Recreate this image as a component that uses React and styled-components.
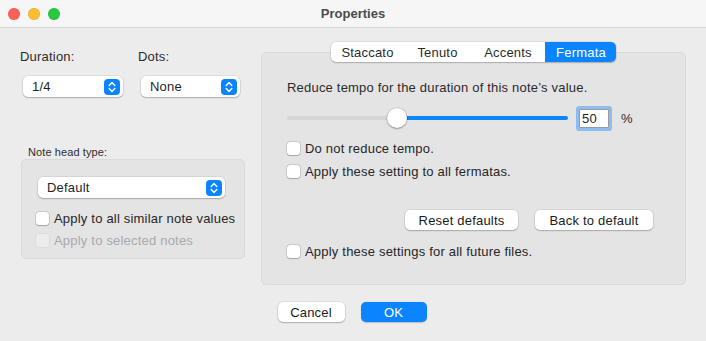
import React from 'react';
import styled, { createGlobalStyle } from 'styled-components';

const GlobalStyle = createGlobalStyle`
  html, body {
    margin: 0;
    padding: 0;
    background: #ececec;
  }
  body {
    font-family: "Liberation Sans", Arial, sans-serif;
    font-size: 13px;
    letter-spacing: 0.2px;
    color: #262626;
  }
`;

const Window = styled.div`
  width: 706px;
  height: 341px;
  background: #ececec;
  display: flex;
  flex-direction: column;
  overflow: hidden;
`;

const TitleBar = styled.div`
  height: 28px;
  flex: none;
  background: #f6f6f6;
  border-bottom: 1px solid #d8d8d8;
  box-sizing: border-box;
  display: flex;
  align-items: center;
  padding-left: 8px;
`;

const Lights = styled.div`
  display: flex;
  gap: 8px;
`;

const Light = styled.span`
  width: 12px;
  height: 12px;
  border-radius: 50%;
  background: ${p => p.color};
  box-shadow: inset 0 0 0 0.5px rgba(0, 0, 0, 0.12);
`;

const Title = styled.div`
  flex: 1;
  text-align: center;
  font-weight: 700;
  font-size: 13px;
  letter-spacing: 0;
  color: #4b4b4b;
  margin-right: 60px;
`;

const Body = styled.div`
  flex: 1;
  display: flex;
  flex-direction: column;
  padding: 14px 20px 0;
`;

const Columns = styled.div`
  display: flex;
  gap: 16px;
`;

const LeftColumn = styled.div`
  width: 225px;
  flex: none;
  padding-top: 7px;
`;

const FieldGrid = styled.div`
  display: grid;
  grid-template-columns: 118px 107px;
`;

const FieldLabel = styled.div`
  line-height: 16px;
  color: #2b2b2b;
  margin-bottom: 11px;
`;

const Popup = styled.div`
  width: ${p => p.width}px;
  height: 21px;
  margin-left: ${p => p.inset || 0}px;
  box-sizing: border-box;
  background: #fff;
  border-radius: 5px;
  box-shadow: 0 0 0 0.5px rgba(0, 0, 0, 0.12), 0 1px 1.5px rgba(0, 0, 0, 0.22);
  display: flex;
  align-items: center;
  justify-content: space-between;
  padding: 0 3px 0 9px;
  color: #1f1f1f;
`;

const PopupArrow = styled.span`
  width: 16px;
  height: 16px;
  border-radius: 4px;
  background: #0b84ff;
  display: flex;
  align-items: center;
  justify-content: center;
`;

const SmallLabel = styled.div`
  font-size: 11px;
  line-height: 13px;
  letter-spacing: 0.1px;
  color: #2e2e2e;
  margin: 49px 0 0 8px;
`;

const GroupBox = styled.div`
  margin-left: 1px;
  height: 100px;
  box-sizing: border-box;
  background: #e4e4e4;
  border: 1px solid #dadada;
  border-radius: 5px;
  padding: 17px 19px 0 14px;
`;

const CheckRow = styled.label`
  display: flex;
  align-items: center;
  gap: 5px;
  height: 16px;
  white-space: nowrap;
  margin-top: ${p => p.top || 0}px;
  color: ${p => (p.disabled ? '#a9a9a9' : '#262626')};
`;

const Box = styled.span`
  width: 13px;
  height: 13px;
  flex: none;
  box-sizing: border-box;
  border-radius: 3px;
  background: ${p => (p.disabled ? '#ececec' : '#fff')};
  box-shadow: ${p =>
    p.disabled
      ? '0 0 0 0.5px rgba(0,0,0,0.08)'
      : '0 0 0 0.5px rgba(0,0,0,0.2), 0 0.5px 1px rgba(0,0,0,0.2)'};
`;

const RightColumn = styled.div`
  flex: 1;
  display: flex;
  flex-direction: column;
  align-items: center;
`;

const Segmented = styled.div`
  display: flex;
  height: 20px;
  background: #fff;
  border-radius: 5px;
  box-shadow: 0 0 0 0.5px rgba(0, 0, 0, 0.12), 0 1px 1.5px rgba(0, 0, 0, 0.2);
  margin-bottom: -10px;
  position: relative;
  z-index: 1;
`;

const Segment = styled.div`
  width: ${p => p.width}px;
  display: flex;
  align-items: center;
  justify-content: center;
  color: ${p => (p.active ? '#fff' : '#2b2b2b')};
  background: ${p => (p.active ? '#0a84ff' : 'transparent')};
  border-radius: ${p => (p.active ? '0 5px 5px 0' : '0')};
  & + & {
    border-left: 1px solid ${p => (p.active ? 'transparent' : '#d6d6d6')};
  }
`;

const Panel = styled.div`
  align-self: stretch;
  height: 233px;
  box-sizing: border-box;
  background: #e4e4e4;
  border: 1px solid #dadada;
  border-radius: 5px;
  padding: 27px 32px 0 25px;
  display: flex;
  flex-direction: column;
`;

const Text = styled.div`
  line-height: 16px;
  color: #2b2b2b;
`;

const SliderRow = styled.div`
  display: flex;
  align-items: center;
  height: 24px;
  margin-top: 10px;
`;

const Slider = styled.div`
  width: 281px;
  height: 20px;
  position: relative;
  display: flex;
  align-items: center;
`;

const Track = styled.div`
  width: 100%;
  height: 4px;
  border-radius: 2px;
  background: linear-gradient(
    to right,
    #d5d5d5 0,
    #d5d5d5 ${p => p.value}%,
    #0a84ff ${p => p.value}%,
    #0a84ff 100%
  );
`;

const Knob = styled.div`
  position: absolute;
  top: 0;
  width: 20px;
  height: 20px;
  margin-left: -10px;
  border-radius: 50%;
  background: #fff;
  box-shadow: 0 0 0 0.5px rgba(0, 0, 0, 0.15), 0 1px 2px rgba(0, 0, 0, 0.3);
`;

const NumberField = styled.div`
  width: 30px;
  height: 19px;
  margin-left: 11px;
  box-sizing: border-box;
  background: #fff;
  border: 1px solid #9a9a9a;
  box-shadow: 0 0 0 3px #8fbcf0;
  border-radius: 1px;
  padding-left: 2px;
  line-height: 17px;
  color: #1f1f1f;
`;

const Unit = styled.span`
  margin-left: 12px;
  color: #2b2b2b;
`;

const ButtonRow = styled.div`
  display: flex;
  justify-content: flex-end;
  gap: 17px;
  margin-top: 31px;
`;

const Button = styled.button`
  width: ${p => p.width}px;
  height: 20px;
  padding: 0;
  border: none;
  border-radius: 5px;
  font-family: inherit;
  font-size: 13px;
  letter-spacing: 0.2px;
  color: ${p => (p.primary ? '#fff' : '#1a1a1a')};
  background: ${p => (p.primary ? '#0a84ff' : '#fff')};
  box-shadow: ${p =>
    p.primary
      ? '0 0.5px 1px rgba(0,0,0,0.2)'
      : '0 0 0 0.5px rgba(0,0,0,0.12), 0 1px 1.5px rgba(0,0,0,0.22)'};
`;

const Footer = styled.div`
  display: flex;
  justify-content: center;
  gap: 16px;
  margin: 17px 2px 0 0;
`;

const Chevrons = () => (
  <svg width="8" height="12" viewBox="0 0 8 12" fill="none">
    <path d="M1.2 4.4 4 1.6l2.8 2.8M1.2 7.6 4 10.4l2.8-2.8" stroke="#fff" strokeWidth="1.4" strokeLinecap="round" strokeLinejoin="round" />
  </svg>
);

const Check = ({ children, disabled, top }) => (
  <CheckRow disabled={disabled} top={top}>
    <Box disabled={disabled} />
    {children}
  </CheckRow>
);

const PopupButton = ({ value, width, inset }) => (
  <Popup width={width} inset={inset}>
    {value}
    <PopupArrow>
      <Chevrons />
    </PopupArrow>
  </Popup>
);

const tabs = [
  { name: 'Staccato', width: 73 },
  { name: 'Tenuto', width: 65 },
  { name: 'Accents', width: 74 },
  { name: 'Fermata', width: 70, active: true },
];

const tempo = 39;

export default function App() {
  return (
    <>
      <GlobalStyle />
      <Window>
        <TitleBar>
          <Lights>
            <Light color="#ff5f57" />
            <Light color="#febc2e" />
            <Light color="#28c840" />
          </Lights>
          <Title>Properties</Title>
        </TitleBar>
        <Body>
          <Columns>
            <LeftColumn>
              <FieldGrid>
                <div>
                  <FieldLabel>Duration:</FieldLabel>
                  <PopupButton value="1/4" width={100} inset={3} />
                </div>
                <div>
                  <FieldLabel>Dots:</FieldLabel>
                  <PopupButton value="None" width={99} inset={3} />
                </div>
              </FieldGrid>
              <SmallLabel>Note head type:</SmallLabel>
              <GroupBox>
                <PopupButton value="Default" width={187} inset={2} />
                <Check top={12}>Apply to all similar note values</Check>
                <Check top={6} disabled>Apply to selected notes</Check>
              </GroupBox>
            </LeftColumn>
            <RightColumn>
              <Segmented>
                {tabs.map(t => (
                  <Segment key={t.name} width={t.width} active={t.active}>
                    {t.name}
                  </Segment>
                ))}
              </Segmented>
              <Panel>
                <Text>Reduce tempo for the duration of this note’s value.</Text>
                <SliderRow>
                  <Slider>
                    <Track value={tempo} />
                    <Knob style={{ left: `${tempo}%` }} />
                  </Slider>
                  <NumberField>50</NumberField>
                  <Unit>%</Unit>
                </SliderRow>
                <Check top={10}>Do not reduce tempo.</Check>
                <Check top={7}>Apply these setting to all fermatas.</Check>
                <ButtonRow>
                  <Button width={113}>Reset defaults</Button>
                  <Button width={118}>Back to default</Button>
                </ButtonRow>
                <Check top={13}>Apply these settings for all future files.</Check>
              </Panel>
            </RightColumn>
          </Columns>
          <Footer>
            <Button width={67}>Cancel</Button>
            <Button width={66} primary>OK</Button>
          </Footer>
        </Body>
      </Window>
    </>
  );
}
